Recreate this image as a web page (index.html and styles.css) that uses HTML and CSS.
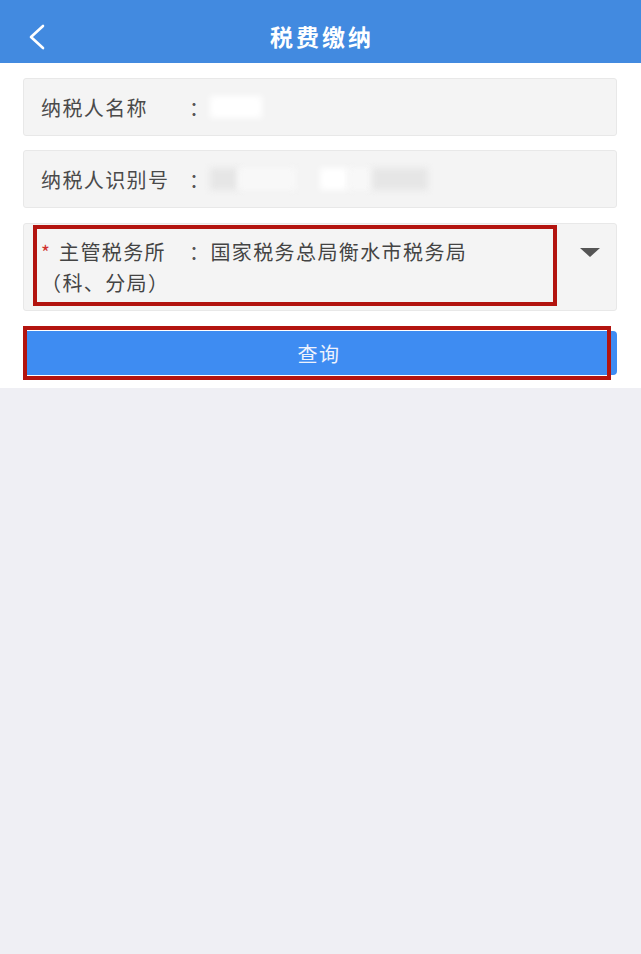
FILE: index.html
```html
<!DOCTYPE html>
<html lang="zh-CN">
  <head>
    <meta charset="UTF-8" />
    <meta name="viewport" content="width=device-width, initial-scale=1.0" />
    <title>税费缴纳</title>
    <link rel="stylesheet" href="styles.css">
  </head>
  <body>
    <header class="topbar">
      <a class="back" href="#">
        <svg width="20" height="26" viewBox="0 0 20 26">
          <polyline points="15,2 3,13 15,24" fill="none" stroke="#fff" stroke-width="2.6" stroke-linecap="round" stroke-linejoin="round" />
        </svg>
      </a>
      <h1 class="title">税费缴纳</h1>
      <span></span>
    </header>

    <main class="form">
      <div class="field">
        <span class="label">纳税人名称</span><span class="colon">：</span>
        <span class="value">
          <span class="smudge smudge-white" style="width: 52px"></span>
        </span>
      </div>

      <div class="field">
        <span class="label">纳税人识别号</span><span class="colon">：</span>
        <span class="value">
          <span class="smudge smudge-grey" style="width: 28px"></span>
          <span class="smudge smudge-light" style="width: 58px"></span>
          <span class="smudge smudge-gap" style="width: 24px"></span>
          <span class="smudge smudge-white" style="width: 28px"></span>
          <span class="smudge smudge-light" style="width: 24px"></span>
          <span class="smudge smudge-grey" style="width: 56px"></span>
        </span>
      </div>

      <div class="field field-select">
        <div class="field-text">
          <div class="line"><span class="req">*</span><span class="label label-req">主管税务所</span><span class="colon">：</span><span class="office">国家税务总局衡水市税务局</span></div>
          <div class="line">（科、分局）</div>
        </div>
        <span class="caret"></span>
        <span class="mark mark-select"></span>
      </div>

      <div class="submit-wrap">
        <button class="submit" type="button">查询</button>
        <span class="mark mark-submit"></span>
      </div>
    </main>

    <div class="rest"></div>
  </body>
</html>
```

FILE: styles.css
```css
html,
body {
  height: 100%;
}
body {
  margin: 0;
  display: flex;
  flex-direction: column;
  font-family: "Noto Sans CJK SC", "Noto Sans", sans-serif;
  background-color: #efeff4;
  color: #4a4a4a;
}
.topbar {
  height: 63px;
  box-sizing: border-box;
  padding: 10px 0 0;
  display: grid;
  grid-template-columns: 1fr auto 1fr;
  align-items: center;
  background-color: #428ae0;
}
.back {
  display: flex;
  padding-left: 28px;
  height: 53px;
  align-items: center;
}
.title {
  margin: 0;
  padding-left: 3px;
  font-size: 23px;
  font-weight: bold;
  letter-spacing: 3px;
  color: #fff;
  line-height: 53px;
}
.form {
  padding: 15px 24px 13px 23px;
  background-color: #fff;
}
.field {
  position: relative;
  display: flex;
  align-items: center;
  box-sizing: border-box;
  height: 58px;
  padding: 0 0 0 17px;
  margin-bottom: 14px;
  background-color: #f4f4f4;
  border: 1px solid #e8e8e8;
  border-radius: 3px;
  font-size: 20px;
  letter-spacing: 1.4px;
  line-height: 31px;
}
.label {
  display: inline-block;
  width: 148px;
  white-space: nowrap;
}
.label-req {
  width: 130px;
}
.colon {
  color: #555;
}
.value {
  display: flex;
  align-items: center;
  height: 24px;
}
.smudge {
  display: inline-block;
  height: 22px;
  filter: blur(3px);
}
.smudge-white {
  background-color: #fff;
}
.smudge-light {
  background-color: #f8f8f8;
}
.smudge-grey {
  background-color: #e6e6e6;
}
.smudge-gap {
  background-color: transparent;
}
.field-select {
  height: auto;
  align-items: flex-start;
  padding: 12px 0 12px 17px;
  margin-top: 15px;
  margin-bottom: 20px;
}
.field-text {
  flex: 0 0 440px;
  color: #444;
}
.line {
  white-space: nowrap;
}
.req {
  display: inline-block;
  width: 18px;
  color: #d0312d;
  font-size: 19px;
  letter-spacing: 0;
}
.caret {
  margin: 12px 16px 0 auto;
  width: 0;
  height: 0;
  border-left: 10px solid transparent;
  border-right: 10px solid transparent;
  border-top: 9px solid #555;
}
.submit-wrap {
  position: relative;
}
.submit {
  display: block;
  width: 100%;
  height: 44px;
  border: none;
  border-radius: 4px;
  background-color: #3e8cf2;
  color: #eef2fd;
  font-family: inherit;
  font-size: 20px;
  letter-spacing: 1.4px;
  padding-left: 4px;
}
.mark {
  position: absolute;
  box-sizing: border-box;
  border: 4px solid #b3140f;
  pointer-events: none;
}
.mark-select {
  left: 9px;
  top: 1px;
  width: 524px;
  height: 81px;
}
.mark-submit {
  left: 0;
  top: -5px;
  width: 588px;
  height: 54px;
}
.rest {
  flex: 1;
}
```
